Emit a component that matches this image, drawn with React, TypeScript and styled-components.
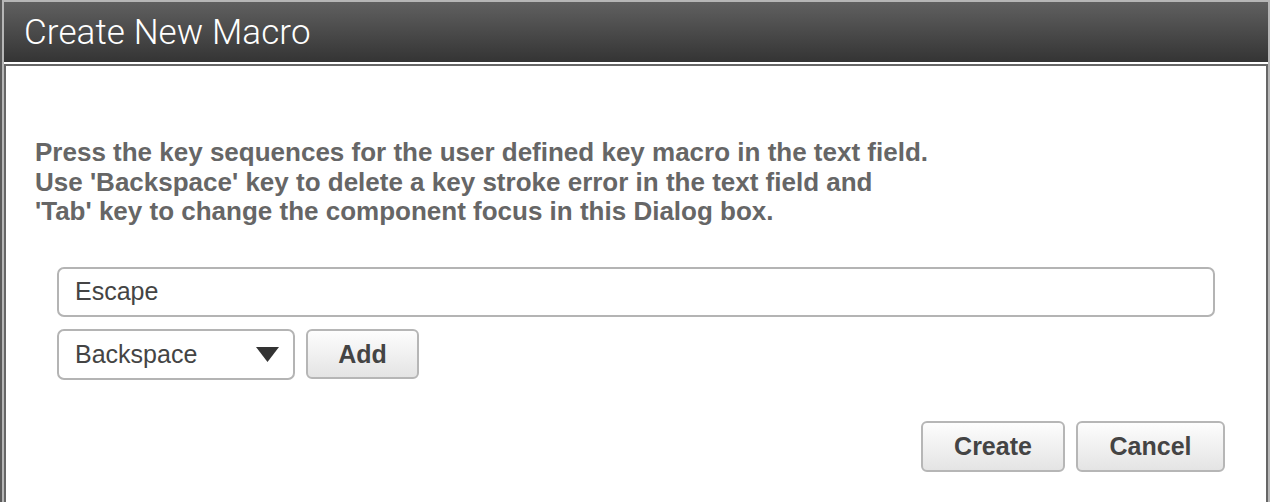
import React, { useState } from 'react';
import styled, { createGlobalStyle } from 'styled-components';

const GlobalStyle = createGlobalStyle`
  html, body {
    margin: 0;
    padding: 0;
    height: 502px;
    overflow: hidden;
    background: #5a5a5a;
  }
  #root {
    height: 100%;
  }
`;

const Frame = styled.div`
  margin-left: 2px;
  height: 100%;
  box-sizing: border-box;
  border: 2px solid #b6b6b6;
  border-bottom: none;
  background: #ffffff;
  display: flex;
  flex-direction: column;
`;

const TitleBar = styled.div`
  height: 60px;
  flex: none;
  display: flex;
  align-items: center;
  padding-left: 20px;
  background: linear-gradient(to bottom, #606060 0%, #343434 100%);
  border-bottom: 2px solid #ffffff;
`;

const Title = styled.h1`
  margin: 0;
  font-family: Roboto, "Liberation Sans", sans-serif;
  font-weight: 300;
  font-size: 35px;
  color: #ffffff;
  letter-spacing: 0.1px;
`;

const Body = styled.div`
  flex: 1;
  border: 2px solid #666666;
  border-bottom: none;
  padding: 72px 41px 0 29px;
  font-family: "Liberation Sans", Arial, sans-serif;
`;

const Instructions = styled.p`
  margin: 0 0 40px 0;
  font-size: 26px;
  line-height: 29.5px;
  font-weight: 700;
  color: #666666;
`;

const Fields = styled.div`
  padding: 0 10px 0 22px;
  display: flex;
  flex-direction: column;
  gap: 12px;
`;

const TextField = styled.input`
  box-sizing: border-box;
  width: 100%;
  height: 50px;
  border: 2px solid #b4b4b4;
  border-radius: 7px;
  padding: 0 16px;
  font-family: "Liberation Sans", Arial, sans-serif;
  font-size: 25px;
  color: #444444;
  background: #ffffff;
  outline: none;
`;

const Row = styled.div`
  display: flex;
  align-items: center;
  gap: 11px;
`;

const SelectBox = styled.div`
  box-sizing: border-box;
  width: 238px;
  height: 51px;
  border: 2px solid #b4b4b4;
  border-radius: 7px;
  padding: 0 14px 0 16px;
  display: flex;
  align-items: center;
  justify-content: space-between;
  font-size: 25px;
  color: #444444;
  background: #ffffff;
`;

const Button = styled.button<{ $w: number }>`
  box-sizing: border-box;
  width: ${p => p.$w}px;
  height: 50px;
  border: 2px solid #b6b6b6;
  border-radius: 6px;
  background: linear-gradient(to bottom, #fdfdfd 0%, #e4e4e4 100%);
  font-family: "Liberation Sans", Arial, sans-serif;
  font-weight: 700;
  font-size: 25px;
  color: #444444;
  padding: 0;
  cursor: pointer;
`;

const Footer = styled.div`
  display: flex;
  justify-content: flex-end;
  gap: 11px;
  margin-top: 41px;
  & > button {
    height: 51px;
  }
`;

const Caret = () => (
  <svg width="23" height="15" viewBox="0 0 23 15">
    <polygon points="0,0 23,0 11.5,15" fill="#333333" />
  </svg>
);

export default function App() {
  const [macro, setMacro] = useState('Escape');

  return (
    <>
      <GlobalStyle />
      <Frame>
        <TitleBar>
          <Title>Create New Macro</Title>
        </TitleBar>
        <Body>
          <Instructions>
            Press the key sequences for the user defined key macro in the text field.
            <br />
            Use 'Backspace' key to delete a key stroke error in the text field and
            <br />
            'Tab' key to change the component focus in this Dialog box.
          </Instructions>
          <Fields>
            <TextField value={macro} onChange={e => setMacro(e.target.value)} />
            <Row>
              <SelectBox>
                <span>Backspace</span>
                <Caret />
              </SelectBox>
              <Button $w={113}>Add</Button>
            </Row>
          </Fields>
          <Footer>
            <Button $w={144}>Create</Button>
            <Button $w={149}>Cancel</Button>
          </Footer>
        </Body>
      </Frame>
    </>
  );
}
